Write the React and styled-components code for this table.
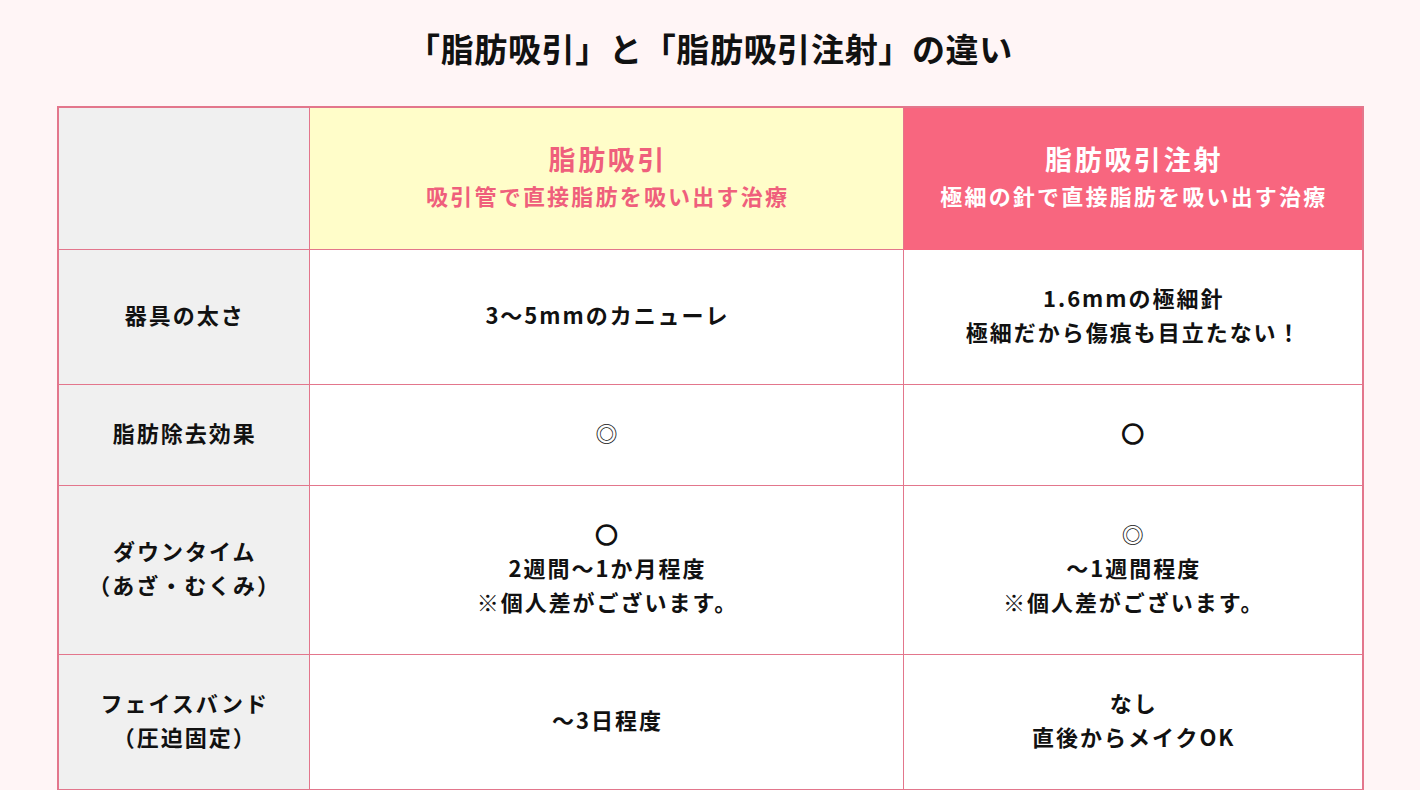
import React from "react";
import styled, { createGlobalStyle } from "styled-components";

const GlobalStyle = createGlobalStyle`
  html, body {
    margin: 0;
    padding: 0;
    background: #fff5f6;
  }
  body {
    font-family: "Noto Sans CJK JP", "Noto Sans", sans-serif;
    color: #1a1a1a;
  }
`;

const rows = [
  {
    label: ["器具の太さ"],
    a: ["3〜5mmのカニューレ"],
    b: ["1.6mmの極細針", "極細だから傷痕も目立たない！"],
  },
  {
    label: ["脂肪除去効果"],
    a: ["◎"],
    b: ["○"],
  },
  {
    label: ["ダウンタイム", "（あざ・むくみ）"],
    a: ["○", "2週間〜1か月程度", "※個人差がございます。"],
    b: ["◎", "〜1週間程度", "※個人差がございます。"],
  },
  {
    label: ["フェイスバンド", "（圧迫固定）"],
    a: ["〜3日程度"],
    b: ["なし", "直後からメイクOK"],
  },
];

function Lines({ lines }) {
  return lines.map((line, i) => (
    <Line key={i} $mark={line === "○" ? "bold" : line === "◎" ? "thin" : ""}>
      {line}
    </Line>
  ));
}

export default function App() {
  return (
    <Page>
      <GlobalStyle />
      <Title>「脂肪吸引」と「脂肪吸引注射」の違い</Title>
      <Table>
        <colgroup>
          <col style={{ width: 252 }} />
          <col style={{ width: 594 }} />
          <col style={{ width: 459 }} />
        </colgroup>
        <thead>
          <tr>
            <LabelCell as="th" />
            <HeadCell $variant="light">
              <HeadName>脂肪吸引</HeadName>
              <HeadNote>吸引管で直接脂肪を吸い出す治療</HeadNote>
            </HeadCell>
            <HeadCell $variant="strong">
              <HeadName>脂肪吸引注射</HeadName>
              <HeadNote>極細の針で直接脂肪を吸い出す治療</HeadNote>
            </HeadCell>
          </tr>
        </thead>
        <tbody>
          {rows.map((row, i) => (
            <tr key={i}>
              <LabelCell>
                <Lines lines={row.label} />
              </LabelCell>
              <Cell>
                <Lines lines={row.a} />
              </Cell>
              <Cell>
                <Lines lines={row.b} />
              </Cell>
            </tr>
          ))}
        </tbody>
      </Table>
    </Page>
  );
}

const Page = styled.div`
  min-height: 790px;
  padding: 24px 0 40px;
  box-sizing: border-box;
`;

const Title = styled.h1`
  margin: 0 0 34px;
  text-align: center;
  font-size: 33px;
  line-height: 48px;
  font-weight: 700;
  letter-spacing: 0.02em;
  color: #111;
`;

const Table = styled.table`
  width: 1305px;
  margin: 0 auto;
  border-collapse: collapse;
  table-layout: fixed;
  border: 2px solid #e3768c;
`;

const BaseCell = styled.td`
  border: 1px solid #e3768c;
  padding: 30px 10px 36px;
  text-align: center;
  vertical-align: middle;
  font-weight: 700;
`;

const LabelCell = styled(BaseCell)`
  background: #f0f0f0;
`;

const Cell = styled(BaseCell)`
  background: #ffffff;
`;

const HeadCell = styled(BaseCell).attrs({ as: "th" })`
  padding: 32px 10px 37px;
  background: ${(p) => (p.$variant === "strong" ? "#f8667f" : "#fffdc9")};
  color: ${(p) => (p.$variant === "strong" ? "#ffffff" : "#ef5f7c")};
  border-color: ${(p) => (p.$variant === "strong" ? "#f8667f" : "#e3768c")};
`;

const HeadName = styled.div`
  font-size: 27px;
  line-height: 38px;
  letter-spacing: 0.1em;
  text-indent: 0.1em;
`;

const HeadNote = styled.div`
  font-size: 22px;
  line-height: 34px;
  letter-spacing: 0.1em;
  text-indent: 0.1em;
`;

const Line = styled.div`
  font-size: 22px;
  line-height: 34px;
  letter-spacing: 0.09em;
  text-indent: 0.09em;
  font-weight: ${(p) => (p.$mark === "thin" ? 400 : 700)};
  -webkit-text-stroke: ${(p) => (p.$mark === "bold" ? "1.6px #111" : "0")};
  color: #111;
`;
